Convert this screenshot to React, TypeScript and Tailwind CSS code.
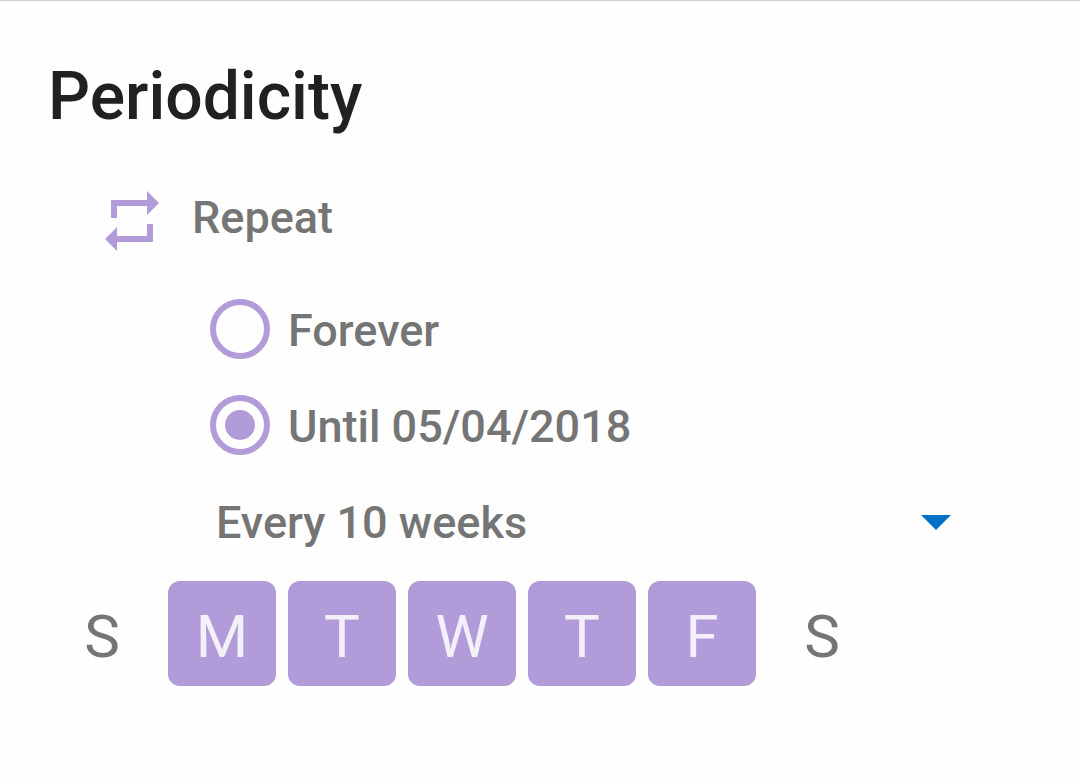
import { useState } from "react";

const days = [
  { name: "Sunday", letter: "S" },
  { name: "Monday", letter: "M" },
  { name: "Tuesday", letter: "T" },
  { name: "Wednesday", letter: "W" },
  { name: "Thursday", letter: "T" },
  { name: "Friday", letter: "F" },
  { name: "Saturday", letter: "S" },
];

function RepeatIcon() {
  return (
    <svg viewBox="0 0 54 60" className="h-[60px] w-[54px] shrink-0 fill-[#b19cd9]" aria-hidden="true">
      <path d="M6 27V9h36V0l12 12-12 12v-9H12v12z" />
      <path d="M48 33v18H12v9L0 48l12-12v9h30V33z" />
    </svg>
  );
}

function EndOption({ id, label, checked, onSelect }: { id: string; label: string; checked: boolean; onSelect: () => void }) {
  return (
    <div className="flex h-24 items-center gap-[18px]">
      <input
        type="radio"
        id={id}
        name="end"
        checked={checked}
        onChange={onSelect}
        className="grid size-[60px] shrink-0 appearance-none place-items-center rounded-full border-[6px] border-[#b19cd9] before:size-[30px] before:rounded-full checked:before:bg-[#b19cd9]"
      />
      <label htmlFor={id} className="pt-1">{label}</label>
    </div>
  );
}

export default function App() {
  const [end, setEnd] = useState("until");
  const [selected, setSelected] = useState([1, 2, 3, 4, 5]);

  const toggle = (day: number) =>
    setSelected((current) => (current.includes(day) ? current.filter((d) => d !== day) : [...current, day]));

  return (
    <main className="min-h-screen border-t border-[#d0d0d0] bg-[#fefefe] pb-12 font-[Roboto,sans-serif] text-[45px] leading-[54px] font-medium text-[#757575]">
      <h1 className="px-12 pt-14 text-[66px] leading-[80px] text-[#212121]">Periodicity</h1>

      <section className="pt-[54px]">
        <div className="flex items-center gap-[33px] pl-[105px]">
          <RepeatIcon />
          <h2 className="pb-1.5">Repeat</h2>
        </div>

        <div role="radiogroup" aria-label="Repeat until" className="pt-[30px] pl-[210px]">
          <EndOption id="forever" label="Forever" checked={end === "forever"} onSelect={() => setEnd("forever")} />
          <EndOption id="until" label="Until 05/04/2018" checked={end === "until"} onSelect={() => setEnd("until")} />
        </div>

        <div className="grid h-24 items-center pt-0.5 pr-[129px] pl-[216px]">
          <select
            aria-label="Frequency"
            defaultValue="10"
            className="col-start-1 row-start-1 w-full appearance-none bg-transparent pt-0.5"
          >
            <option value="10">Every 10 weeks</option>
          </select>
          <svg viewBox="0 0 30 15" className="pointer-events-none col-start-1 row-start-1 h-[15px] w-[30px] justify-self-end fill-[#0072c6]" aria-hidden="true">
            <path d="M0 0h30L15 15z" />
          </svg>
        </div>

        <div role="group" aria-label="Days of the week" className="flex gap-3 pt-3 pl-12 text-[60px] font-normal">
          {days.map((day, index) => {
            const on = selected.includes(index);
            return (
              <button
                key={day.name}
                type="button"
                aria-pressed={on}
                title={day.name}
                onClick={() => toggle(index)}
                className={`h-[105px] w-[108px] rounded-xl pt-1.5 ${on ? "bg-[#b19cd9] text-white/85" : "text-[#757575]"}`}
              >
                {day.letter}
              </button>
            );
          })}
        </div>
      </section>
    </main>
  );
}
